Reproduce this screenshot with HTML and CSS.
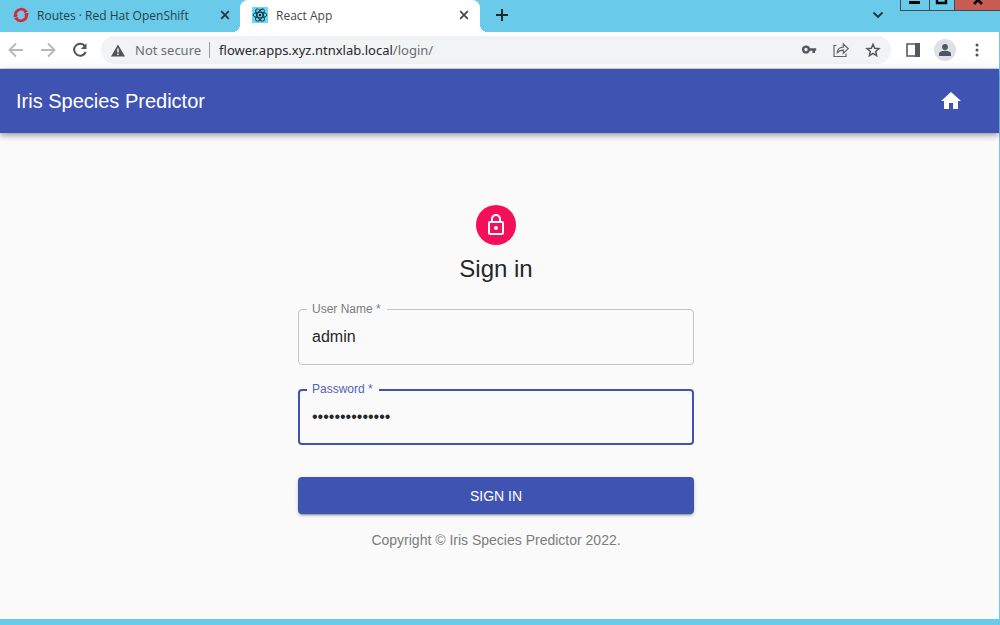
FILE: index.html
```html
<!DOCTYPE html>
<html lang="en">
<head>
<meta charset="utf-8">
<meta name="viewport" content="width=device-width, initial-scale=1">
<title>React App</title>
<link rel="stylesheet" href="styles.css">
</head>
<body>
<div class="window">
  <div class="tabstrip">
    <div class="tab">
      <svg class="favicon" viewBox="0 0 16 16" fill="none" stroke="#db2837" stroke-width="2.800"><path d="M2.300 10V7.500A6 6 0 0 1 12.800 4.300"/><path d="M13.700 6v2.500A6 6 0 0 1 3.200 11.700"/><path d="M.6 9.600l3.800-1.500M11.600 7.900l3.800-1.500M11 5.600l3.400-1.500M1.600 11.900l3.400-1.500" stroke-width="1.600"/></svg>
      <span class="tab-title">Routes · Red Hat OpenShift</span>
      <button class="tab-button" aria-label="Close Routes tab"><svg width="10" height="10" viewBox="0 0 10 10" stroke="#26343b" stroke-width="1.8"><path d="M1.2 1.2l7.6 7.6M8.8 1.2L1.2 8.8"/></svg></button>
    </div>
    <div class="tab tab-active">
      <svg class="favicon" viewBox="0 0 16 16"><rect width="16" height="16" rx="1" fill="#61dafb"/><g fill="none" stroke="#20232a" stroke-width=".9"><ellipse cx="8" cy="8" rx="6.8" ry="2.8"/><ellipse cx="8" cy="8" rx="6.8" ry="2.8" transform="rotate(60 8 8)"/><ellipse cx="8" cy="8" rx="6.8" ry="2.8" transform="rotate(120 8 8)"/></g><circle cx="8" cy="8" r="1.2" fill="#20232a"/></svg>
      <span class="tab-title">React App</span>
      <button class="tab-button" aria-label="Close React App tab"><svg width="10" height="10" viewBox="0 0 10 10" stroke="#45494d" stroke-width="1.8"><path d="M1.2 1.2l7.6 7.6M8.8 1.2L1.2 8.8"/></svg></button>
    </div>
    <button class="new-tab" aria-label="New tab"><svg width="12" height="12" viewBox="0 0 12 12" stroke="#1c2a30" stroke-width="2"><path d="M6 0v12M0 6h12"/></svg></button>
    <button class="tab-search" aria-label="Search tabs"><svg width="12" height="8" viewBox="0 0 12 8" fill="none" stroke="#1c3440" stroke-width="1.9"><path d="M1.5 1.5L6 6l4.500-4.500"/></svg></button>
    <div class="window-controls">
      <button class="control" aria-label="Minimize"><svg width="28" height="11" viewBox="0 0 28 11"><path d="M8 1h11v3H8z"/></svg></button>
      <button class="control control-max" aria-label="Maximize"><svg width="26" height="11" viewBox="0 0 26 11"><path d="M8-5h9v8H8z" fill="none" stroke="#000" stroke-width="2.400"/></svg></button>
      <button class="control control-close" aria-label="Close"><svg width="46" height="11" viewBox="0 0 46 11"><path d="M19-4l8 8M27-4l-8 8" stroke="#000" stroke-width="2.600"/></svg></button>
    </div>
  </div>

  <div class="toolbar">
    <button class="tool" aria-label="Back"><svg width="16" height="16" viewBox="0 0 16 16" fill="none" stroke="#b5b7ba" stroke-width="1.8"><path d="M15 8H2M8 1.500L1.500 8 8 14.500"/></svg></button>
    <button class="tool" aria-label="Forward"><svg width="16" height="16" viewBox="0 0 16 16" fill="none" stroke="#b5b7ba" stroke-width="1.8"><path d="M1 8h13M8 1.500L14.500 8 8 14.500"/></svg></button>
    <button class="tool" aria-label="Reload"><svg width="16" height="16" viewBox="0 0 16 16"><path d="M13 4.200A6 6 0 1 0 13.700 10" fill="none" stroke="#505458" stroke-width="2"/><path d="M14.500 1.200v5.800H8.800z" fill="#505458"/></svg></button>
    <div class="omnibox">
      <svg width="14" height="13" viewBox="0 0 14 13"><path d="M7 .5L14 12.500H0z" fill="#505458"/><path d="M7 4.500v4M7 9.500v1.600" stroke="#f1f3f4" stroke-width="1.500"/></svg>
      <span class="security">Not secure</span>
      <span class="address"><span class="host">flower.apps.xyz.ntnxlab.local</span>/login/</span>
      <button class="omni-button" aria-label="Saved passwords"><svg width="16" height="16" viewBox="0 0 16 16"><circle cx="5" cy="7.500" r="2.900" fill="none" stroke="#55595d" stroke-width="2.400"/><path d="M8 6.300h7.200v2.400H14v2.200h-2.600V8.700H8z" fill="#55595d"/></svg></button>
      <button class="omni-button" aria-label="Share"><svg width="16" height="16" viewBox="0 0 16 16" fill="none" stroke="#63676b" stroke-width="1.200"><path d="M3.500 3.500H1v11h12v-3"/><path d="M4 11.200c.5-4 2.700-6 6.300-6V2L15.300 6.700l-5 4.600V8.200c-3 0-4.700.8-6.300 3z"/></svg></button>
      <button class="omni-button" aria-label="Bookmark"><svg width="16" height="16" viewBox="0 0 16 16" fill="none" stroke="#55595d" stroke-width="1.500"><path d="M8 2.300l1.700 3.900 4.200.4-3.200 2.800.9 4.200L8 11.400l-3.600 2.200.9-4.200-3.200-2.800 4.200-.4z"/></svg></button>
    </div>
    <button class="tool" aria-label="Side panel"><svg width="14" height="14" viewBox="0 0 14 14"><path d="M1 1h12v12H1z" fill="none" stroke="#55595d" stroke-width="1.600"/><path d="M9 0h5v14H9z" fill="#55595d"/></svg></button>
    <button class="tool profile" aria-label="Profile"><svg width="12" height="12" viewBox="0 0 12 12" fill="#4a5568"><circle cx="6" cy="3" r="2.900"/><path d="M0 12V9.800C0 7.600 4 6.800 6 6.800s6 .8 6 3V12z"/></svg></button>
    <button class="tool menu" aria-label="Menu"><svg width="4" height="14" viewBox="0 0 4 14" fill="#505458"><circle cx="2" cy="2" r="1.500"/><circle cx="2" cy="7" r="1.500"/><circle cx="2" cy="12" r="1.500"/></svg></button>
  </div>

  <div class="page">
    <header class="appbar">
      <h1 class="brand">Iris Species Predictor</h1>
      <a class="home" href="#" aria-label="Home"><svg width="24" height="24" viewBox="0 0 24 24" fill="#fff"><path d="M10 20v-6h4v6h5v-8h3L12 3 2 12h3v8z"/></svg></a>
    </header>
    <main class="content">
      <form class="login">
        <div class="avatar"><svg width="24" height="24" viewBox="0 0 24 24" fill="#fff"><path d="M12 17c1.100 0 2-.9 2-2s-.9-2-2-2-2 .9-2 2 .9 2 2 2zm6-9h-1V6c0-2.760-2.240-5-5-5S7 3.240 7 6v2H6c-1.100 0-2 .9-2 2v10c0 1.100.9 2 2 2h12c1.100 0 2-.9 2-2V10c0-1.100-.9-2-2-2zM8.900 6c0-1.710 1.390-3.100 3.100-3.100s3.100 1.390 3.100 3.100v2H8.900V6zM18 20H6V10h12v10z"/></svg></div>
        <h2 class="heading">Sign in</h2>
        <div class="field">
          <label class="field-label" for="username">User Name *</label>
          <input class="field-input" id="username" type="text" value="admin">
        </div>
        <div class="field field-focused">
          <label class="field-label" for="password">Password *</label>
          <input class="field-input" id="password" type="password" value="irispredictor1">
        </div>
        <button class="submit" type="button">SIGN IN</button>
        <p class="copyright">Copyright © Iris Species Predictor 2022.</p>
      </form>
    </main>
  </div>
</div>
</body>
</html>
```
FILE: styles.css
```css
* { box-sizing: border-box; }

body {
  margin: 0;
  background: #69cbe9;
  font-family: "Liberation Sans", Arial, sans-serif;
}

button {
  display: flex;
  align-items: center;
  justify-content: center;
  margin: 0;
  padding: 0;
  border: 0;
  background: none;
  font: inherit;
}

svg { display: block; flex: none; }

.window {
  display: flex;
  flex-direction: column;
  min-height: 100vh;
  padding: 0 1px 6px 0;
}

/* Tab strip */
.tabstrip {
  display: flex;
  height: 32px;
  margin-right: -1px;
  font-family: "Open Sans", "Noto Sans", sans-serif;
  font-size: 12px;
}

.tab {
  display: flex;
  align-items: center;
  gap: 8px;
  width: 240px;
  padding: 0 7px 2px 13px;
  color: #263f49;
}

.tab-active {
  position: relative;
  padding-right: 8px;
  padding-left: 12px;
  border-radius: 8px 8px 0 0;
  background: #fff;
  color: #45494d;
}

.tab-active::before,
.tab-active::after {
  content: "";
  position: absolute;
  bottom: 0;
  width: 8px;
  height: 8px;
}

.tab-active::before {
  right: 100%;
  background: radial-gradient(circle at 0 0, transparent 8px, #fff 8px);
}

.tab-active::after {
  left: 100%;
  background: radial-gradient(circle at 100% 0, transparent 8px, #fff 8px);
}

.favicon { width: 16px; height: 16px; }
.tab-title { flex: 1; white-space: nowrap; }
.tab-button { width: 16px; height: 16px; }
.new-tab { width: 28px; margin-left: 8px; padding-bottom: 2px; }
.tab-search { width: 28px; margin-left: auto; margin-right: 8px; padding-bottom: 2px; }

.window-controls {
  display: flex;
  height: 11px;
  border: solid #414b50;
  border-width: 0 0 1px 1px;
}

.control { width: 28px; overflow: hidden; }
.control-max { width: 26px; border: solid #414b50; border-width: 0 1px; }
.control-close { width: 45px; background: #c75c54; }

/* Toolbar */
.toolbar {
  display: flex;
  align-items: center;
  height: 37px;
  padding-right: 14px;
  border-bottom: 1px solid #d5d7dc;
  background: #fff;
}

.tool { width: 32px; height: 32px; }

.omnibox {
  display: flex;
  flex: 1;
  align-items: center;
  height: 28px;
  margin: 0 6px 0 5px;
  padding: 0 10px;
  border-radius: 14px;
  background: #f1f3f4;
  font-family: "Noto Sans", "Open Sans", sans-serif;
  font-size: 13px;
  color: #6a6e72;
}

.security {
  margin-left: 10px;
  padding-right: 8px;
  border-right: 1px solid #999da1;
  line-height: 16px;
  white-space: nowrap;
}

.address { flex: 1; margin-left: 9px; }
.host { color: #26282b; }
.omni-button { width: 16px; height: 16px; margin-left: 16px; }
.toolbar .profile { width: 22px; height: 22px; margin: 0 5px; border-radius: 50%; background: #dfe0e3; }
.menu { margin-right: -8px; }

/* Page */
.page {
  display: flex;
  flex: 1;
  flex-direction: column;
  background: #fafafa;
}

.appbar {
  display: flex;
  align-items: center;
  justify-content: space-between;
  height: 64px;
  padding: 0 24px 0 16px;
  background: #3f54b2;
  box-shadow: 0 2px 4px -1px rgba(0, 0, 0, .2), 0 4px 5px rgba(0, 0, 0, .14), 0 1px 10px rgba(0, 0, 0, .12);
  color: #fff;
}

.brand { margin: 0; font-size: 20px; font-weight: 400; line-height: 32px; }
.home { padding: 12px; }

.content { padding: 72px 7px 0 0; }

.login {
  display: flex;
  flex-direction: column;
  max-width: 396px;
  margin: 0 auto;
}

.avatar {
  display: flex;
  align-items: center;
  justify-content: center;
  align-self: center;
  width: 40px;
  height: 40px;
  border-radius: 50%;
  background: #f50f5a;
}

.heading {
  margin: 8px 0 24px;
  font-size: 24px;
  font-weight: 400;
  line-height: 32px;
  text-align: center;
  color: #26262a;
}

.field { position: relative; height: 56px; margin-bottom: 24px; }

.field-label {
  position: absolute;
  top: -8px;
  left: 9px;
  padding: 0 6px 0 5px;
  background: #fafafa;
  font-size: 12px;
  line-height: 16px;
  color: #7c7c7c;
}

.field-input {
  width: 100%;
  height: 100%;
  padding: 0 13px;
  border: 1px solid #c4c4c4;
  border-radius: 4px;
  outline: 0;
  background: transparent;
  font: 16px "Liberation Sans", Arial, sans-serif;
  color: #26262a;
}

.field-focused .field-label { color: #5163b9; }
.field-focused .field-input { padding: 0 12px; border: 2px solid #3f54b2; }

.submit {
  height: 37px;
  margin-top: 8px;
  border-radius: 4px;
  background: #3f54b2;
  box-shadow: 0 3px 1px -2px rgba(0, 0, 0, .2), 0 2px 2px rgba(0, 0, 0, .14), 0 1px 5px rgba(0, 0, 0, .12);
  font-size: 14px;
  color: #fff;
}

.copyright {
  margin: 16px 0;
  font-size: 14px;
  line-height: 20px;
  text-align: center;
  color: #7c7c7c;
}
```
